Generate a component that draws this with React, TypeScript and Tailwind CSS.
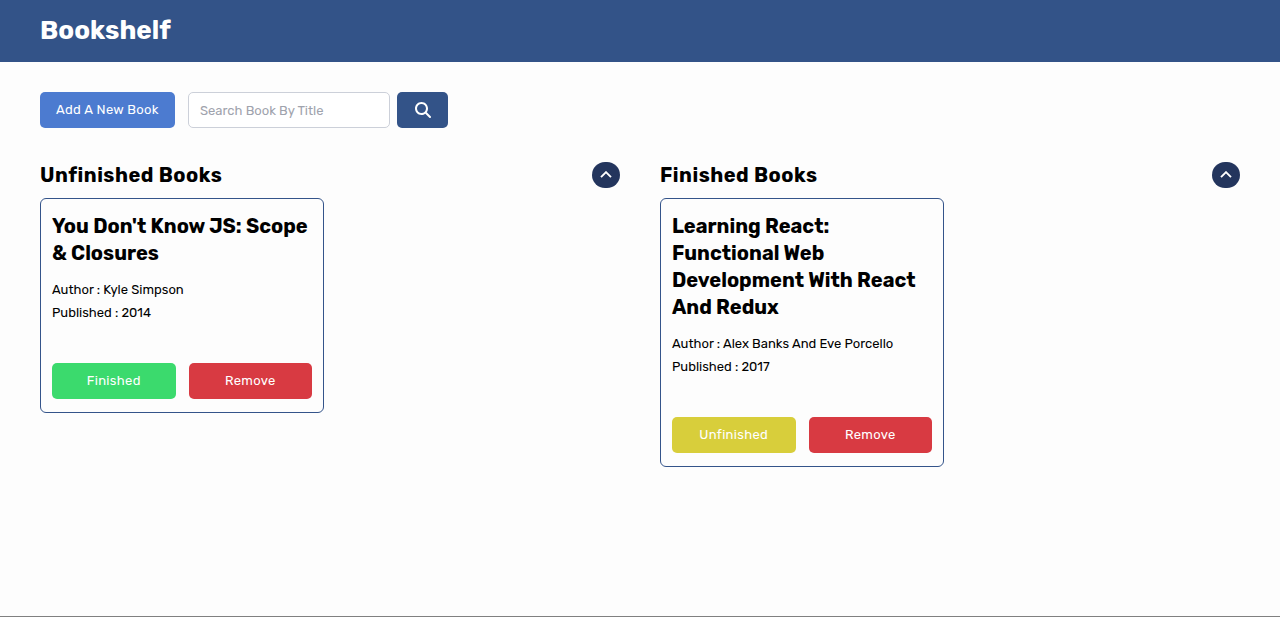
import { useState } from "react";
import { FaMagnifyingGlass } from "react-icons/fa6";

type Book = { title: string; author: string; year: number; finished: boolean };

const initialBooks: Book[] = [
  { title: "You Don't Know JS: Scope & Closures", author: "Kyle Simpson", year: 2014, finished: false },
  {
    title: "Learning React: Functional Web Development With React And Redux",
    author: "Alex Banks And Eve Porcello",
    year: 2017,
    finished: true,
  },
];

type CardProps = { book: Book; onToggle: () => void; onRemove: () => void };

function BookCard({ book, onToggle, onRemove }: CardProps) {
  return (
    <article className="rounded-md border border-[#34548a] px-[11px] pt-[14px] pb-[13px]">
      <h3 className="text-[20px] leading-[27px] font-bold">{book.title}</h3>
      <p className="mt-[11px] text-[13px] leading-[23px]">Author : {book.author}</p>
      <p className="text-[13px] leading-[23px]">Published : {book.year}</p>
      <div className="mt-[39px] grid grid-cols-2 gap-[13px] text-[13px] tracking-wide text-white">
        <button
          type="button"
          onClick={onToggle}
          className={`h-9 rounded-[5px] ${book.finished ? "bg-[#d8ce3b]" : "bg-[#3bda6d]"}`}
        >
          {book.finished ? "Unfinished" : "Finished"}
        </button>
        <button type="button" onClick={onRemove} className="h-9 rounded-[5px] bg-[#d83a42]">
          Remove
        </button>
      </div>
    </article>
  );
}

type ShelfProps = {
  heading: string;
  books: Book[];
  onToggle: (book: Book) => void;
  onRemove: (book: Book) => void;
};

function Shelf({ heading, books, onToggle, onRemove }: ShelfProps) {
  const [open, setOpen] = useState(true);
  return (
    <section>
      <div className="flex items-center justify-between">
        <h2 className="text-[20px] leading-[26px] font-bold tracking-wide">{heading}</h2>
        <button
          type="button"
          aria-label={`Toggle ${heading}`}
          aria-expanded={open}
          onClick={() => setOpen(!open)}
          className="flex h-[26px] w-7 items-center justify-center rounded-full bg-[#23355d] text-white"
        >
          <svg viewBox="0 0 12 8" className={`h-2 w-3 ${open ? "" : "rotate-180"}`} fill="none" aria-hidden="true">
            <path d="M1 6.2 6 1.2l5 5" stroke="currentColor" strokeWidth="1.9" />
          </svg>
        </button>
      </div>
      {open && (
        <div className="mt-[10px] grid grid-cols-2 items-start gap-3">
          {books.map((book) => (
            <BookCard
              key={book.title}
              book={book}
              onToggle={() => onToggle(book)}
              onRemove={() => onRemove(book)}
            />
          ))}
        </div>
      )}
    </section>
  );
}

export default function App() {
  const [books, setBooks] = useState(initialBooks);
  const [query, setQuery] = useState("");
  const shown = books.filter((b) => b.title.toLowerCase().includes(query.toLowerCase()));
  const toggle = (book: Book) =>
    setBooks(books.map((b) => (b === book ? { ...b, finished: !b.finished } : b)));
  const remove = (book: Book) => setBooks(books.filter((b) => b !== book));

  return (
    <div className="min-h-screen border-b border-[#808080] bg-[#fdfdfd] font-['Rubik','Inter',sans-serif] text-black">
      <header className="bg-[#335388] px-10 py-[13px]">
        <h1 className="text-[26px] leading-9 font-bold text-white">Bookshelf</h1>
      </header>
      <main className="px-10 pt-[30px]">
        <div className="flex text-[13px]">
          <button type="button" className="h-9 w-[135px] rounded-[5px] bg-[#4c7bd0] tracking-wide text-white">
            Add A New Book
          </button>
          <form className="ml-[13px] flex gap-[7px]" onSubmit={(e) => e.preventDefault()}>
            <input
              type="text"
              aria-label="Search Book By Title"
              placeholder="Search Book By Title"
              value={query}
              onChange={(e) => setQuery(e.target.value)}
              className="h-9 w-[202px] rounded-[5px] border border-[#ccd0d9] bg-white px-[11px] placeholder:text-[#9fa3ad]"
            />
            <button
              type="submit"
              aria-label="Search"
              className="flex h-9 w-[51px] items-center justify-center rounded-[5px] bg-[#335388] text-white"
            >
              <FaMagnifyingGlass className="size-4" />
            </button>
          </form>
        </div>
        <div className="mt-[34px] grid grid-cols-2 gap-10">
          <Shelf
            heading="Unfinished Books"
            books={shown.filter((b) => !b.finished)}
            onToggle={toggle}
            onRemove={remove}
          />
          <Shelf
            heading="Finished Books"
            books={shown.filter((b) => b.finished)}
            onToggle={toggle}
            onRemove={remove}
          />
        </div>
      </main>
    </div>
  );
}
